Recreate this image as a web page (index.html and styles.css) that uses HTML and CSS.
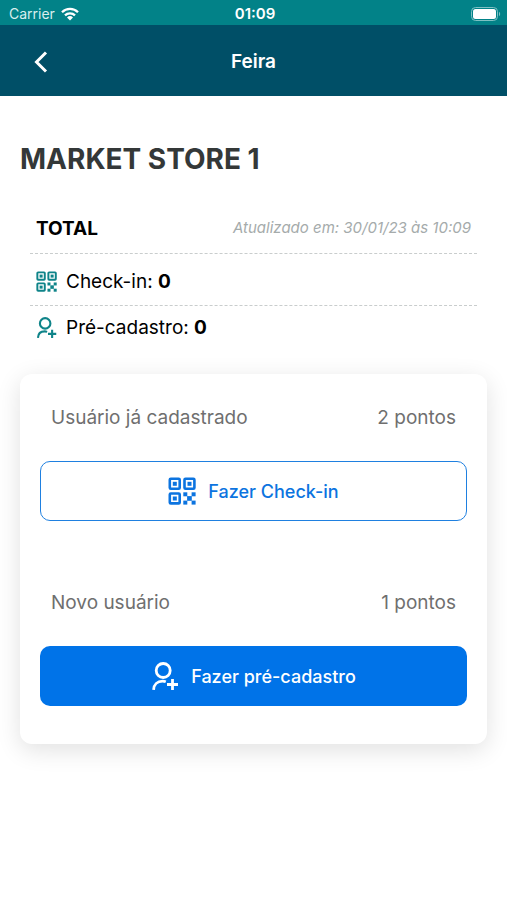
FILE: index.html
```html
<!DOCTYPE html>
<html lang="pt-BR">
<head>
  <meta charset="UTF-8">
  <meta name="viewport" content="width=device-width, initial-scale=1.0">
  <title>Feira</title>
  <link rel="stylesheet" href="styles.css">
</head>
<body>
  <!-- Ícones reutilizados -->
  <svg class="icon-defs" aria-hidden="true">
    <symbol id="icon-qr" viewBox="0 0 28 28">
      <g fill="none" stroke="currentColor" stroke-width="2.6">
        <rect x="1.8" y="1.8" width="9.9" height="9.9" rx="1"/>
        <rect x="16.5" y="1.8" width="9.9" height="9.9" rx="1"/>
        <rect x="1.8" y="16.5" width="9.9" height="9.9" rx="1"/>
      </g>
      <g fill="currentColor">
        <rect x="4.8" y="4.8" width="4" height="4"/>
        <rect x="19.5" y="4.8" width="4" height="4"/>
        <rect x="4.8" y="19.5" width="4" height="4"/>
        <rect x="15.3" y="15.3" width="4" height="4"/>
        <rect x="23.6" y="15.3" width="4" height="4"/>
        <rect x="19.1" y="19.1" width="4.7" height="4.7"/>
        <rect x="15.3" y="23.6" width="4" height="4"/>
        <rect x="23.6" y="23.6" width="4" height="4"/>
      </g>
    </symbol>
    <symbol id="icon-user" viewBox="0 0 28 28">
      <g fill="none" stroke="currentColor" stroke-width="2.8">
        <circle cx="12.2" cy="8.5" r="7"/>
        <path d="M2.6 27.8c.3-5.4 3.8-8.6 9-8.6 1.2 0 2.2.2 3.2.6M16 22.5h11M21.5 17v11"/>
      </g>
    </symbol>
  </svg>

  <div class="status-bar">
    <div class="carrier">
      <span>Carrier</span>
      <svg class="wifi" viewBox="0 0 18 14" aria-hidden="true">
        <g fill="none" stroke="currentColor" stroke-width="2.3">
          <path d="M1 5.2a11.4 11.4 0 0 1 16 0"/>
          <path d="M4 8.4a7.1 7.1 0 0 1 10 0"/>
        </g>
        <path d="M9 13.4 6 10.5a4.3 4.3 0 0 1 6 0z" fill="currentColor"/>
      </svg>
    </div>
    <time class="clock">01:09</time>
    <svg class="battery" viewBox="0 0 30 14" aria-hidden="true">
      <rect x=".5" y=".5" width="26" height="13" rx="4" fill="none" stroke="#7fc0c3"/>
      <rect x="2" y="2" width="23" height="10" rx="2.5" fill="#fff"/>
      <path d="M28 4.8a2.6 2.6 0 0 1 0 4.4z" fill="#7fc0c3"/>
    </svg>
  </div>

  <header class="header">
    <button type="button" class="back" aria-label="Voltar">
      <svg viewBox="0 0 14 22" aria-hidden="true">
        <path d="M12 1.5 2.5 11l9.5 9.5" fill="none" stroke="currentColor" stroke-width="3"/>
      </svg>
    </button>
    <h1>Feira</h1>
  </header>

  <main class="content">
    <h2>MARKET STORE 1</h2>

    <section class="totals">
      <div class="row total-row">
        <h3>TOTAL</h3>
        <span class="updated">Atualizado em: 30/01/23 às 10:09</span>
      </div>
      <div class="row check-row">
        <svg class="icon-small" aria-hidden="true"><use href="#icon-qr"/></svg>
        <span>Check-in: <b>0</b></span>
      </div>
      <div class="row user-row">
        <svg class="icon-small" aria-hidden="true"><use href="#icon-user"/></svg>
        <span>Pré-cadastro: <b>0</b></span>
      </div>
    </section>

    <section class="card">
      <div class="option">
        <div class="option-info">
          <span>Usuário já cadastrado</span>
          <span>2 pontos</span>
        </div>
        <button type="button" class="btn btn-outline">
          <svg class="icon" aria-hidden="true"><use href="#icon-qr"/></svg>
          Fazer Check-in
        </button>
      </div>
      <div class="option">
        <div class="option-info">
          <span>Novo usuário</span>
          <span>1 pontos</span>
        </div>
        <button type="button" class="btn btn-primary">
          <svg class="icon" aria-hidden="true"><use href="#icon-user"/></svg>
          Fazer pré-cadastro
        </button>
      </div>
    </section>
  </main>
</body>
</html>
```
FILE: styles.css
```css
* {
  box-sizing: border-box;
}
body {
  margin: 0;
  font-family: Inter, "Liberation Sans", sans-serif;
  background-color: #fff;
  color: #000;
}
h1, h2, h3 {
  margin: 0;
}
button {
  font-family: inherit;
  cursor: pointer;
}
.icon-defs {
  display: none;
}

/* Barra de status */
.status-bar {
  display: grid;
  grid-template-columns: 1fr auto 1fr;
  align-items: center;
  height: 25px;
  padding: 2px 6px 0 9px;
  background-color: #028288;
  color: #fff;
  font-size: 14px;
}
.carrier {
  display: flex;
  align-items: center;
  gap: 6px;
  color: #d9eeee;
}
.wifi {
  width: 18px;
  height: 14px;
  color: #fff;
}
.clock {
  font-size: 15px;
  font-weight: 600;
}
.battery {
  width: 30px;
  height: 14px;
  justify-self: end;
}

/* Cabeçalho */
.header {
  display: grid;
  grid-template-columns: 1fr auto 1fr;
  align-items: center;
  height: 71px;
  padding: 2px 24px 0;
  background-color: #004f67;
  color: #fff;
}
.header h1 {
  font-size: 19px;
  font-weight: 600;
}
.back {
  display: flex;
  justify-self: start;
  padding: 10px;
  border: 0;
  background: none;
  color: #fff;
}
.back svg {
  width: 14px;
  height: 22px;
}

/* Conteúdo */
.content {
  padding: 44px 20px;
}
.content h2 {
  font-size: 28px;
  line-height: 38px;
  font-weight: 700;
  color: #343838;
}
.totals {
  margin: 26px 10px 0;
}
.row {
  display: flex;
  align-items: center;
  padding: 0 6px;
  font-size: 19px;
}
.row + .row {
  gap: 9px;
  border-top: 1px dashed #c9cdcd;
}
.row b {
  font-weight: 700;
}
.total-row {
  justify-content: space-between;
  height: 49px;
}
.total-row h3 {
  font-size: 19px;
  font-weight: 700;
}
.updated {
  padding-bottom: 3px;
  font-size: 15px;
  font-style: italic;
  color: #a5abab;
}
.check-row {
  height: 52px;
  padding-top: 3px;
}
.user-row {
  height: 44px;
}
.icon-small {
  width: 21px;
  height: 21px;
  color: #0f8489;
}

/* Cartão com as opções */
.card {
  display: flex;
  flex-direction: column;
  gap: 70px;
  margin-top: 25px;
  padding: 32px 20px 38px;
  border-radius: 12px;
  background-color: #fff;
  box-shadow: 0 6px 24px rgba(0, 0, 0, 0.12);
}
.option-info {
  display: flex;
  justify-content: space-between;
  margin-bottom: 31px;
  padding: 0 11px;
  font-size: 19px;
  line-height: 24px;
  color: #6f6f6f;
}
.btn {
  display: flex;
  align-items: center;
  justify-content: center;
  gap: 12px;
  width: 100%;
  height: 60px;
  border: 0;
  border-radius: 10px;
  font-size: 18px;
  font-weight: 500;
}
.btn-outline {
  border: 1px solid #1f80e0;
  background-color: #fff;
  color: #0c74e0;
}
.btn-primary {
  background-color: #0073e8;
  color: #fff;
}
.icon {
  width: 28px;
  height: 28px;
}
```
